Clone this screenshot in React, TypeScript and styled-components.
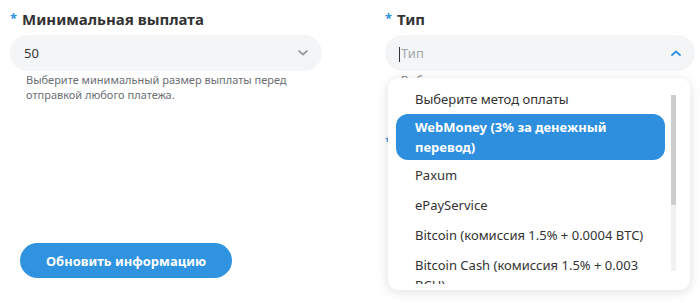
import React from 'react'
import styled, { createGlobalStyle } from 'styled-components'

const GlobalStyle = createGlobalStyle`
  html, body {
    margin: 0;
    padding: 0;
    background: #ffffff;
    font-family: 'Noto Sans', 'Open Sans', sans-serif;
    color: #333;
  }
`

const Page = styled.div`
  display: grid;
  grid-template-columns: 312px 310px;
  column-gap: 63px;
  padding: 9px 0 0 10px;
  width: 700px;
  height: 303px;
  box-sizing: border-box;
  overflow: hidden;
`

const Column = styled.div`
  position: relative;
  display: flex;
  flex-direction: column;
`

const Label = styled.div<{ spaced?: boolean }>`
  display: flex;
  align-items: center;
  gap: 5px;
  font-size: 15px;
  font-weight: 700;
  color: #333;
  height: 20px;
  margin-bottom: 6px;
  margin-top: ${({ spaced }) => (spaced ? '45px' : '0')};
`

const Star = styled.span`
  color: #2f93e0;
  font-size: 13px;
  font-weight: 700;
  margin-top: -3px;
`

const Field = styled.div<{ muted?: boolean }>`
  display: flex;
  align-items: center;
  justify-content: space-between;
  height: 36px;
  border-radius: 18px;
  background: #f4f5f7;
  padding: 0 14px 0 14px;
  font-size: 13px;
  color: ${({ muted }) => (muted ? '#a3a6ab' : '#333')};
`

const Caret = styled.span`
  display: inline-block;
  width: 1px;
  height: 15px;
  background: #333;
  margin-right: 1px;
  vertical-align: middle;
`

const Hint = styled.div`
  font-size: 11px;
  line-height: 15px;
  color: #6b6e72;
  padding: 1px 16px 0;
`

const Button = styled.button`
  margin-top: auto;
  margin-bottom: 25px;
  margin-left: 10px;
  width: 212px;
  height: 35px;
  border: none;
  border-radius: 18px;
  background: #2f93e0;
  color: #fff;
  font-family: inherit;
  font-size: 13px;
  font-weight: 700;
`

const Menu = styled.div`
  position: absolute;
  top: 69px;
  left: 3px;
  width: 302px;
  height: 212px;
  background: #fff;
  border-radius: 10px;
  box-shadow: 0 2px 12px rgba(0, 0, 0, 0.13);
  box-sizing: border-box;
  padding: 6px 25px 6px 8px;
`

const List = styled.div`
  height: 200px;
  overflow: hidden;
`

const Item = styled.div<{ active?: boolean }>`
  padding: ${({ active }) => (active ? '3px 19px 3px' : '5px 19px')};
  min-height: 20px;
  line-height: 20px;
  font-size: 13px;
  border-radius: 12px;
  background: ${({ active }) => (active ? '#2f8fdf' : 'transparent')};
  color: ${({ active }) => (active ? '#fff' : '#333')};
  font-weight: ${({ active }) => (active ? 700 : 400)};
`

const Track = styled.div`
  position: absolute;
  top: 17px;
  right: 14px;
  width: 5px;
  height: 176px;
  background: #f1f1f1;
`

const Thumb = styled.div`
  width: 100%;
  height: 110px;
  background: #cdcdcd;
`

const Chevron = ({ up, color }: { up?: boolean; color: string }) => (
  <svg width="10" height="6" viewBox="0 0 10 6">
    <path
      d={up ? 'M1 5 L5 1.5 L9 5' : 'M1 1 L5 4.5 L9 1'}
      fill="none"
      stroke={color}
      strokeWidth="1.8"
      strokeLinecap="round"
      strokeLinejoin="round"
    />
  </svg>
)

const items = [
  'Выберите метод оплаты',
  'WebMoney (3% за денежный перевод)',
  'Paxum',
  'ePayService',
  'Bitcoin (комиссия 1.5% + 0.0004 BTC)',
  'Bitcoin Cash (комиссия 1.5% + 0.003 BCH)'
]

export default function App() {
  return (
    <>
      <GlobalStyle />
      <Page>
        <Column>
          <Label>
            <Star>*</Star>Минимальная выплата
          </Label>
          <Field>
            50
            <Chevron color="#9a9da2" />
          </Field>
          <Hint>
            Выберите минимальный размер выплаты перед
            <br />
            отправкой любого платежа.
          </Hint>
          <Button>Обновить информацию</Button>
        </Column>
        <Column>
          <Label>
            <Star>*</Star>Тип
          </Label>
          <Field muted>
            <span>
              <Caret />
              Тип
            </span>
            <Chevron up color="#2f8fdf" />
          </Field>
          <Hint>Выберите метод оплаты для получения выплат</Hint>
          <Label spaced>
            <Star>*</Star>Кошелёк
          </Label>
          <Menu>
            <List>
              {items.map((text, i) => (
                <Item key={text} active={i === 1}>
                  {text}
                </Item>
              ))}
            </List>
            <Track>
              <Thumb />
            </Track>
          </Menu>
        </Column>
      </Page>
    </>
  )
}
